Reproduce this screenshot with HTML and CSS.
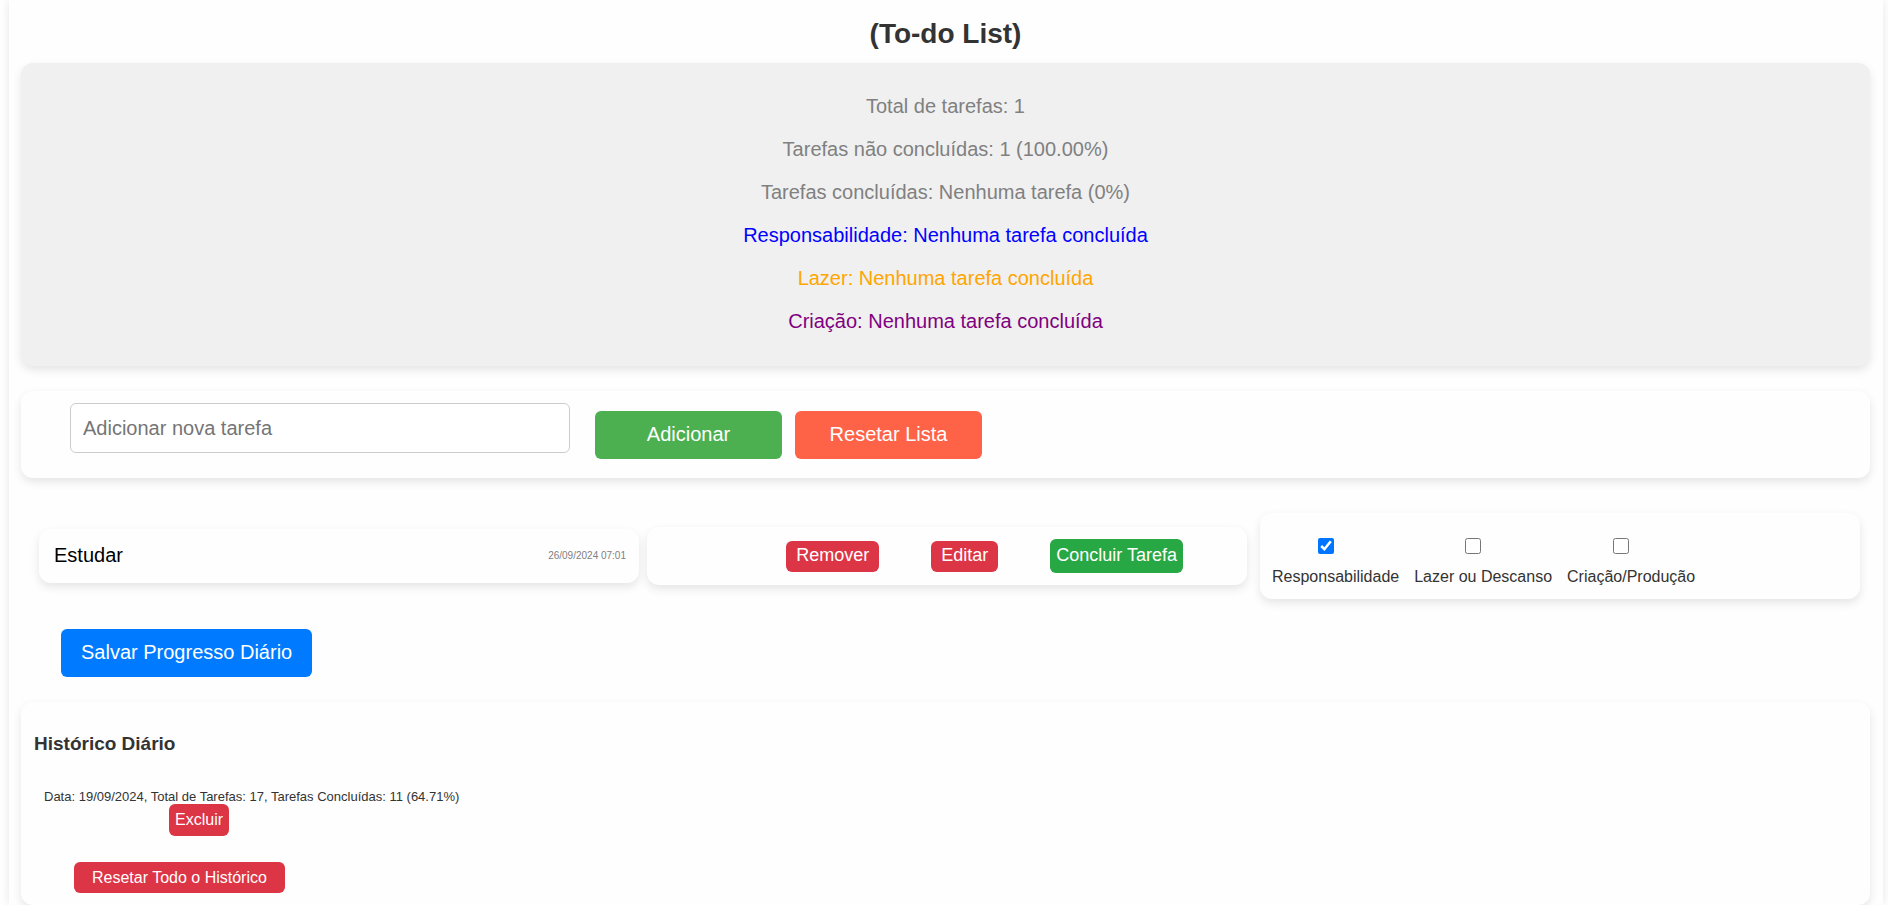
FILE: index.html
```html
<!DOCTYPE html>
<html lang="pt-BR">
<head>
<meta charset="utf-8">
<title>To-do List</title>
<link rel="stylesheet" href="styles.css">
</head>
<body>
<main class="container">
  <h1 class="title">(To-do List)</h1>
  <section class="card summary">
    <p>Total de tarefas: 1</p>
    <p>Tarefas não concluídas: 1 (100.00%)</p>
    <p>Tarefas concluídas: Nenhuma tarefa (0%)</p>
    <p class="duty">Responsabilidade: Nenhuma tarefa concluída</p>
    <p class="leisure">Lazer: Nenhuma tarefa concluída</p>
    <p class="creation">Criação: Nenhuma tarefa concluída</p>
  </section>
  <form class="card add-form">
    <input class="new-task" type="text" placeholder="Adicionar nova tarefa" aria-label="Adicionar nova tarefa">
    <div class="form-actions">
      <button class="btn btn-large btn-add" type="button">Adicionar</button>
      <button class="btn btn-large btn-reset" type="button">Resetar Lista</button>
    </div>
  </form>
  <ul class="tasks">
    <li class="task">
      <div class="card task-info">
        <span class="task-name">Estudar</span>
        <time class="task-date" datetime="2024-09-26T07:01">26/09/2024 07:01</time>
      </div>
      <div class="card task-actions">
        <button class="btn btn-small" type="button">Remover</button>
        <button class="btn btn-small" type="button">Editar</button>
        <button class="btn btn-done" type="button">Concluir Tarefa</button>
      </div>
      <div class="card task-types">
        <label class="type"><input type="checkbox" checked>Responsabilidade</label>
        <label class="type"><input type="checkbox">Lazer ou Descanso</label>
        <label class="type"><input type="checkbox">Criação/Produção</label>
      </div>
    </li>
  </ul>
  <button class="btn btn-large btn-save" type="button">Salvar Progresso Diário</button>
  <section class="card history">
    <h2 class="history-title">Histórico Diário</h2>
    <ul class="entries">
      <li class="entry">
        <span>Data: 19/09/2024, Total de Tarefas: 17, Tarefas Concluídas: 11 (64.71%)</span>
        <button class="btn btn-delete" type="button">Excluir</button>
      </li>
    </ul>
    <button class="btn btn-clear" type="button">Resetar Todo o Histórico</button>
  </section>
</main>
</body>
</html>
```

FILE: styles.css
```css
* {
  box-sizing: border-box;
}

body {
  margin: 0;
  padding: 0 5px 0 9px;
  background: #fff;
  color: #333;
  font-family: "Liberation Sans", Arial, sans-serif;
  font-size: 16px;
}

.container {
  padding: 16px 13px 0 12px;
  background: #fefefe;
  box-shadow: 0 0 10px rgba(0, 0, 0, 0.1);
}

.title {
  margin: 0 0 11px;
  font-size: 28px;
  line-height: 36px;
  text-align: center;
}

.card {
  border-radius: 12px;
  background: #fefefe;
  box-shadow: 0 4px 10px rgba(0, 0, 0, 0.1);
}

.summary {
  display: flex;
  flex-direction: column;
  gap: 20px;
  padding: 32px 12px 33px;
  background: #f0f0f0;
  color: #808080;
  font-size: 20px;
  line-height: 23px;
  text-align: center;
}

.summary p {
  margin: 0;
}

.summary .duty {
  color: #00f;
}

.summary .leisure {
  color: #ffa500;
}

.summary .creation {
  color: #800080;
}

.btn {
  border: 0;
  border-radius: 6px;
  background: #dc3545;
  color: #fff;
  font-family: inherit;
  font-size: 16px;
  cursor: pointer;
}

.btn-large {
  height: 48px;
  padding: 0 20px 2px;
  font-size: 20px;
}

.add-form {
  display: flex;
  gap: 25px;
  margin-top: 25px;
  padding: 12px 49px 19px;
}

.new-task {
  width: 500px;
  height: 50px;
  padding: 0 12px;
  border: 1px solid #ccc;
  border-radius: 6px;
  background: #fff;
  font-family: inherit;
  font-size: 20px;
}

.new-task::placeholder {
  color: #757575;
}

.form-actions {
  display: flex;
  gap: 13px;
  padding-top: 8px;
}

.btn-add,
.btn-reset {
  width: 187px;
}

.btn-add {
  background: #4caf50;
}

.btn-reset {
  background: #ff6347;
}

.tasks,
.entries {
  margin: 0;
  padding: 0;
  list-style: none;
}

.tasks {
  padding: 35px 10px 30px 18px;
}

.task {
  display: grid;
  grid-template-columns: [info] 1fr 8px [actions] 1fr 13px [types] 1fr;
  align-items: center;
}

.task-info {
  display: flex;
  grid-column: info;
  align-items: center;
  justify-content: space-between;
  height: 54px;
  padding: 0 13px 2px 15px;
}

.task-name {
  color: #000;
  font-size: 20px;
}

.task-date {
  color: #808080;
  font-size: 10px;
}

.task-actions {
  display: flex;
  grid-column: actions;
  align-items: center;
  justify-content: flex-end;
  gap: 52px;
  height: 58px;
  padding: 0 64px 0 12px;
}

.btn-small {
  height: 31px;
  padding: 0 10px 2px;
  font-size: 18px;
}

.btn-done {
  height: 34px;
  padding: 0 6px 2px;
  background: #28a745;
  font-size: 18px;
}

.task-types {
  display: flex;
  grid-column: types;
  gap: 15px;
  padding: 25px 12px 12px;
}

.type {
  display: flex;
  flex-direction: column;
  align-items: center;
  gap: 13px;
  line-height: 20px;
}

.type input {
  width: 16px;
  height: 16px;
  margin: 0 20px 0 0;
}

.btn-save {
  display: block;
  margin: 0 40px 25px;
  background: #007bff;
}

.history {
  padding: 30px 13px 12px;
}

.history-title {
  margin: 0;
  font-size: 19px;
  line-height: 23px;
}

.entries {
  display: flex;
  padding: 34px 10px 26px;
}

.entry {
  display: flex;
  flex-direction: column;
  align-items: flex-start;
  font-size: 13px;
  line-height: 15px;
}

.btn-delete {
  height: 32px;
  margin-left: 125px;
  padding: 0 6px;
}

.btn-clear {
  height: 31px;
  margin-left: 40px;
  padding: 0 18px;
}
```
